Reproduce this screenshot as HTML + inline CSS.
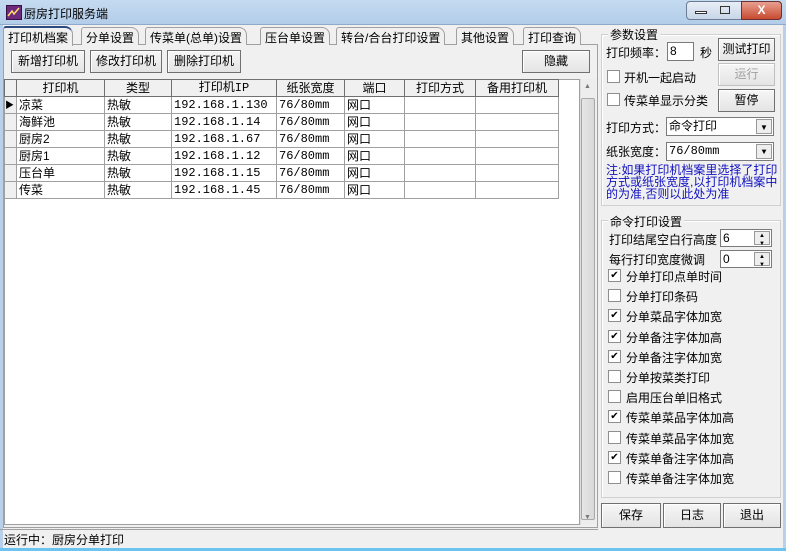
<!DOCTYPE html>
<html><head><meta charset="utf-8"><style>
*{box-sizing:border-box;margin:0;padding:0}
body{width:786px;height:551px;overflow:hidden;background:#f0f0f0;font-family:"Liberation Sans","Noto Sans CJK SC",sans-serif;font-size:12px;color:#000;position:relative}
.a{position:absolute;white-space:nowrap}
.m{font-family:"Liberation Mono","Noto Sans CJK SC",monospace;font-size:12px}
.title{left:0;top:0;width:786px;height:25px;background:linear-gradient(#c4daf0,#b3cde9);border-bottom:1px solid #8eaacb}
.frameL{left:0;top:25px;width:3px;height:526px;background:#b8d0ea}
.frameR{right:0;top:25px;width:3px;height:526px;background:#b8d0ea}
.frameB{left:0;bottom:0;width:786px;height:3px;background:#6cc3ef}
.btn{position:absolute;background:linear-gradient(#f6f6f6,#e4e4e4);border:1px solid #707070;box-shadow:inset 1px 1px #fff;text-align:center;font-size:12px}
.tab{position:absolute;top:27px;height:18px;border:1px solid #a0a0a0;border-bottom:none;border-radius:3px 8px 0 0;background:#f0f0f0;padding:1px 4px;font-size:12px}
table{border-collapse:collapse;position:absolute;left:4px;top:79px;font-size:12px}
td{border:1px solid #a0a0a0;height:17px;padding:0 2px;line-height:15px;overflow:hidden}
th{border:1px solid #707070;height:17px;font-weight:normal;background:#f0f0f0;line-height:15px}
.grp{position:absolute;border:1px solid #d0d0d0;box-shadow:inset 1px 1px #fff}
.gl{position:absolute;background:#f0f0f0;padding:0 2px;font-size:12px}
.cb{position:absolute;width:13px;height:13px;border:1px solid #8e8e8e;background:#fff;font-size:10px;line-height:11px;text-align:center}
.inp{position:absolute;background:#fff;border:1px solid #7a7a7a;font-size:12px;padding-left:2px;line-height:16px}
.dd{position:absolute;right:1px;top:1px;width:16px;bottom:1px;background:#eee;border:1px solid #999;font-size:8px;text-align:center;line-height:15px}
</style></head><body>
<div class="a title"></div>
<div class="a" style="left:6px;top:5px;width:16px;height:15px;background:#6b2a7a;border:1px solid #3b1048"><svg width="14" height="13"><path d="M1 10 L5 5 L7 8 L12 2" stroke="#ffe070" stroke-width="1.5" fill="none"/></svg></div>
<div class="a" style="left:24px;top:5px;font-size:12px">厨房打印服务端</div>
<div class="a" style="left:686px;top:1px;width:96px;height:19px;border:1px solid #6d7c93;border-radius:4px;background:linear-gradient(#e8eef6,#c8d6e8)"></div>
<div class="a" style="left:741px;top:1px;width:41px;height:19px;border:1px solid #6b3030;border-radius:0 4px 4px 0;background:linear-gradient(#e8a090,#c84a30);color:#fff;text-align:center;font-weight:bold;line-height:17px">X</div>
<div class="a" style="left:695px;top:11px;width:12px;height:3px;border:1px solid #333;background:#fff"></div>
<div class="a" style="left:720px;top:6px;width:10px;height:8px;border:1px solid #333"></div>
<div class="a frameL"></div><div class="a frameR"></div><div class="a frameB"></div>

<div class="a" style="left:3px;top:44px;width:595px;height:484px;border:1px solid #a0a0a0;background:#f0f0f0"></div>
<div class="tab" style="left:81px">分单设置</div>
<div class="tab" style="left:145px">传菜单(总单)设置</div>
<div class="tab" style="left:260px">压台单设置</div>
<div class="tab" style="left:336px">转台/合台打印设置</div>
<div class="tab" style="left:456px">其他设置</div>
<div class="tab" style="left:523px">打印查询</div>
<div class="tab" style="left:3px;top:26px;height:20px;border-top:2px solid #2a4a80;background:#f0f0f0;z-index:2">打印机档案</div>

<div class="btn" style="left:11px;top:50px;width:74px;height:23px;line-height:21px">新增打印机</div>
<div class="btn" style="left:90px;top:50px;width:72px;height:23px;line-height:21px">修改打印机</div>
<div class="btn" style="left:167px;top:50px;width:74px;height:23px;line-height:21px">删除打印机</div>
<div class="btn" style="left:522px;top:50px;width:68px;height:23px;line-height:21px">隐藏</div>

<div class="a" style="left:4px;top:79px;width:576px;height:446px;background:#fff;border:1px solid #a0a0a0"></div>
<table>
<tr><th style="width:12px"></th><th style="width:88px">打印机</th><th style="width:67px">类型</th><th style="width:105px" class="m">打印机IP</th><th style="width:68px">纸张宽度</th><th style="width:60px">端口</th><th style="width:71px">打印方式</th><th style="width:83px">备用打印机</th></tr>
<tr><td style="background:#f0f0f0;font-size:9px;padding:0">▶</td><td>凉菜</td><td>热敏</td><td class="m">192.168.1.130</td><td class="m">76/80mm</td><td>网口</td><td></td><td></td></tr>
<tr><td style="background:#f0f0f0"></td><td>海鲜池</td><td>热敏</td><td class="m">192.168.1.14</td><td class="m">76/80mm</td><td>网口</td><td></td><td></td></tr>
<tr><td style="background:#f0f0f0"></td><td>厨房2</td><td>热敏</td><td class="m">192.168.1.67</td><td class="m">76/80mm</td><td>网口</td><td></td><td></td></tr>
<tr><td style="background:#f0f0f0"></td><td>厨房1</td><td>热敏</td><td class="m">192.168.1.12</td><td class="m">76/80mm</td><td>网口</td><td></td><td></td></tr>
<tr><td style="background:#f0f0f0"></td><td>压台单</td><td>热敏</td><td class="m">192.168.1.15</td><td class="m">76/80mm</td><td>网口</td><td></td><td></td></tr>
<tr><td style="background:#f0f0f0"></td><td>传菜</td><td>热敏</td><td class="m">192.168.1.45</td><td class="m">76/80mm</td><td>网口</td><td></td><td></td></tr>
</table>
<div class="a" style="left:580px;top:79px;width:16px;height:446px;background:#ededed;border-left:1px solid #ddd"></div>
<div class="a" style="left:581px;top:98px;width:14px;height:422px;background:linear-gradient(90deg,#e6e6e6,#d8d8d8);border:1px solid #a8a8a8;border-radius:2px"></div>
<div class="a" style="left:584px;top:83px;font-size:7px;color:#777">▲</div>
<div class="a" style="left:584px;top:514px;font-size:7px;color:#777">▼</div>

<div class="a" style="left:0;top:529px;width:598px;height:19px;border-top:1px solid #a0a0a0"></div>
<div class="a" style="left:4px;top:531px">运行中：厨房分单打印</div>

<div class="grp" style="left:601px;top:34px;width:180px;height:172px"></div>
<div class="gl" style="left:608px;top:26px">参数设置</div>
<div class="a" style="left:606px;top:44px">打印频率：</div>
<div class="inp" style="left:667px;top:42px;width:27px;height:19px">8</div>
<div class="a" style="left:700px;top:44px">秒</div>
<div class="btn" style="left:718px;top:38px;width:57px;height:23px;line-height:21px">测试打印</div>
<div class="cb" style="left:607px;top:70px"></div><div class="a" style="left:624px;top:69px">开机一起启动</div>
<div class="btn" style="left:718px;top:63px;width:57px;height:23px;line-height:21px;color:#a0a0a0;border-color:#c0c0c0">运行</div>
<div class="cb" style="left:607px;top:93px"></div><div class="a" style="left:624px;top:92px">传菜单显示分类</div>
<div class="btn" style="left:718px;top:89px;width:57px;height:23px;line-height:21px">暂停</div>
<div class="a" style="left:606px;top:119px">打印方式：</div>
<div class="inp" style="left:666px;top:117px;width:108px;height:19px">命令打印<div class="dd">▼</div></div>
<div class="a" style="left:606px;top:143px">纸张宽度：</div>
<div class="inp m" style="left:666px;top:142px;width:108px;height:19px">76/80mm<div class="dd">▼</div></div>
<div class="a" style="left:606px;top:164px;color:#1010c0;line-height:12px;font-size:12px;white-space:normal;width:174px">注:如果打印机档案里选择了打印方式或纸张宽度,以打印机档案中的为准,否则以此处为准</div>

<div class="grp" style="left:601px;top:220px;width:180px;height:278px"></div>
<div class="gl" style="left:608px;top:213px">命令打印设置</div>
<div class="a" style="left:609px;top:231px">打印结尾空白行高度</div>
<div class="inp" style="left:720px;top:229px;width:52px;height:18px">6<div class="dd" style="font-size:6px;line-height:8px">▲<br>▼</div></div>
<div class="a" style="left:609px;top:251px">每行打印宽度微调</div>
<div class="inp" style="left:720px;top:250px;width:52px;height:18px">0<div class="dd" style="font-size:6px;line-height:8px">▲<br>▼</div></div>

<div class="cb" style="left:608px;top:269px">✔</div><div class="a" style="left:626px;top:268px">分单打印点单时间</div>
<div class="cb" style="left:608px;top:289px"></div><div class="a" style="left:626px;top:288px">分单打印条码</div>
<div class="cb" style="left:608px;top:309px">✔</div><div class="a" style="left:626px;top:308px">分单菜品字体加宽</div>
<div class="cb" style="left:608px;top:330px">✔</div><div class="a" style="left:626px;top:329px">分单备注字体加高</div>
<div class="cb" style="left:608px;top:350px">✔</div><div class="a" style="left:626px;top:349px">分单备注字体加宽</div>
<div class="cb" style="left:608px;top:370px"></div><div class="a" style="left:626px;top:369px">分单按菜类打印</div>
<div class="cb" style="left:608px;top:390px"></div><div class="a" style="left:626px;top:389px">启用压台单旧格式</div>
<div class="cb" style="left:608px;top:410px">✔</div><div class="a" style="left:626px;top:409px">传菜单菜品字体加高</div>
<div class="cb" style="left:608px;top:431px"></div><div class="a" style="left:626px;top:430px">传菜单菜品字体加宽</div>
<div class="cb" style="left:608px;top:451px">✔</div><div class="a" style="left:626px;top:450px">传菜单备注字体加高</div>
<div class="cb" style="left:608px;top:471px"></div><div class="a" style="left:626px;top:470px">传菜单备注字体加宽</div>

<div class="btn" style="left:601px;top:503px;width:60px;height:25px;line-height:23px">保存</div>
<div class="btn" style="left:663px;top:503px;width:58px;height:25px;line-height:23px">日志</div>
<div class="btn" style="left:723px;top:503px;width:58px;height:25px;line-height:23px">退出</div>
</body></html>
